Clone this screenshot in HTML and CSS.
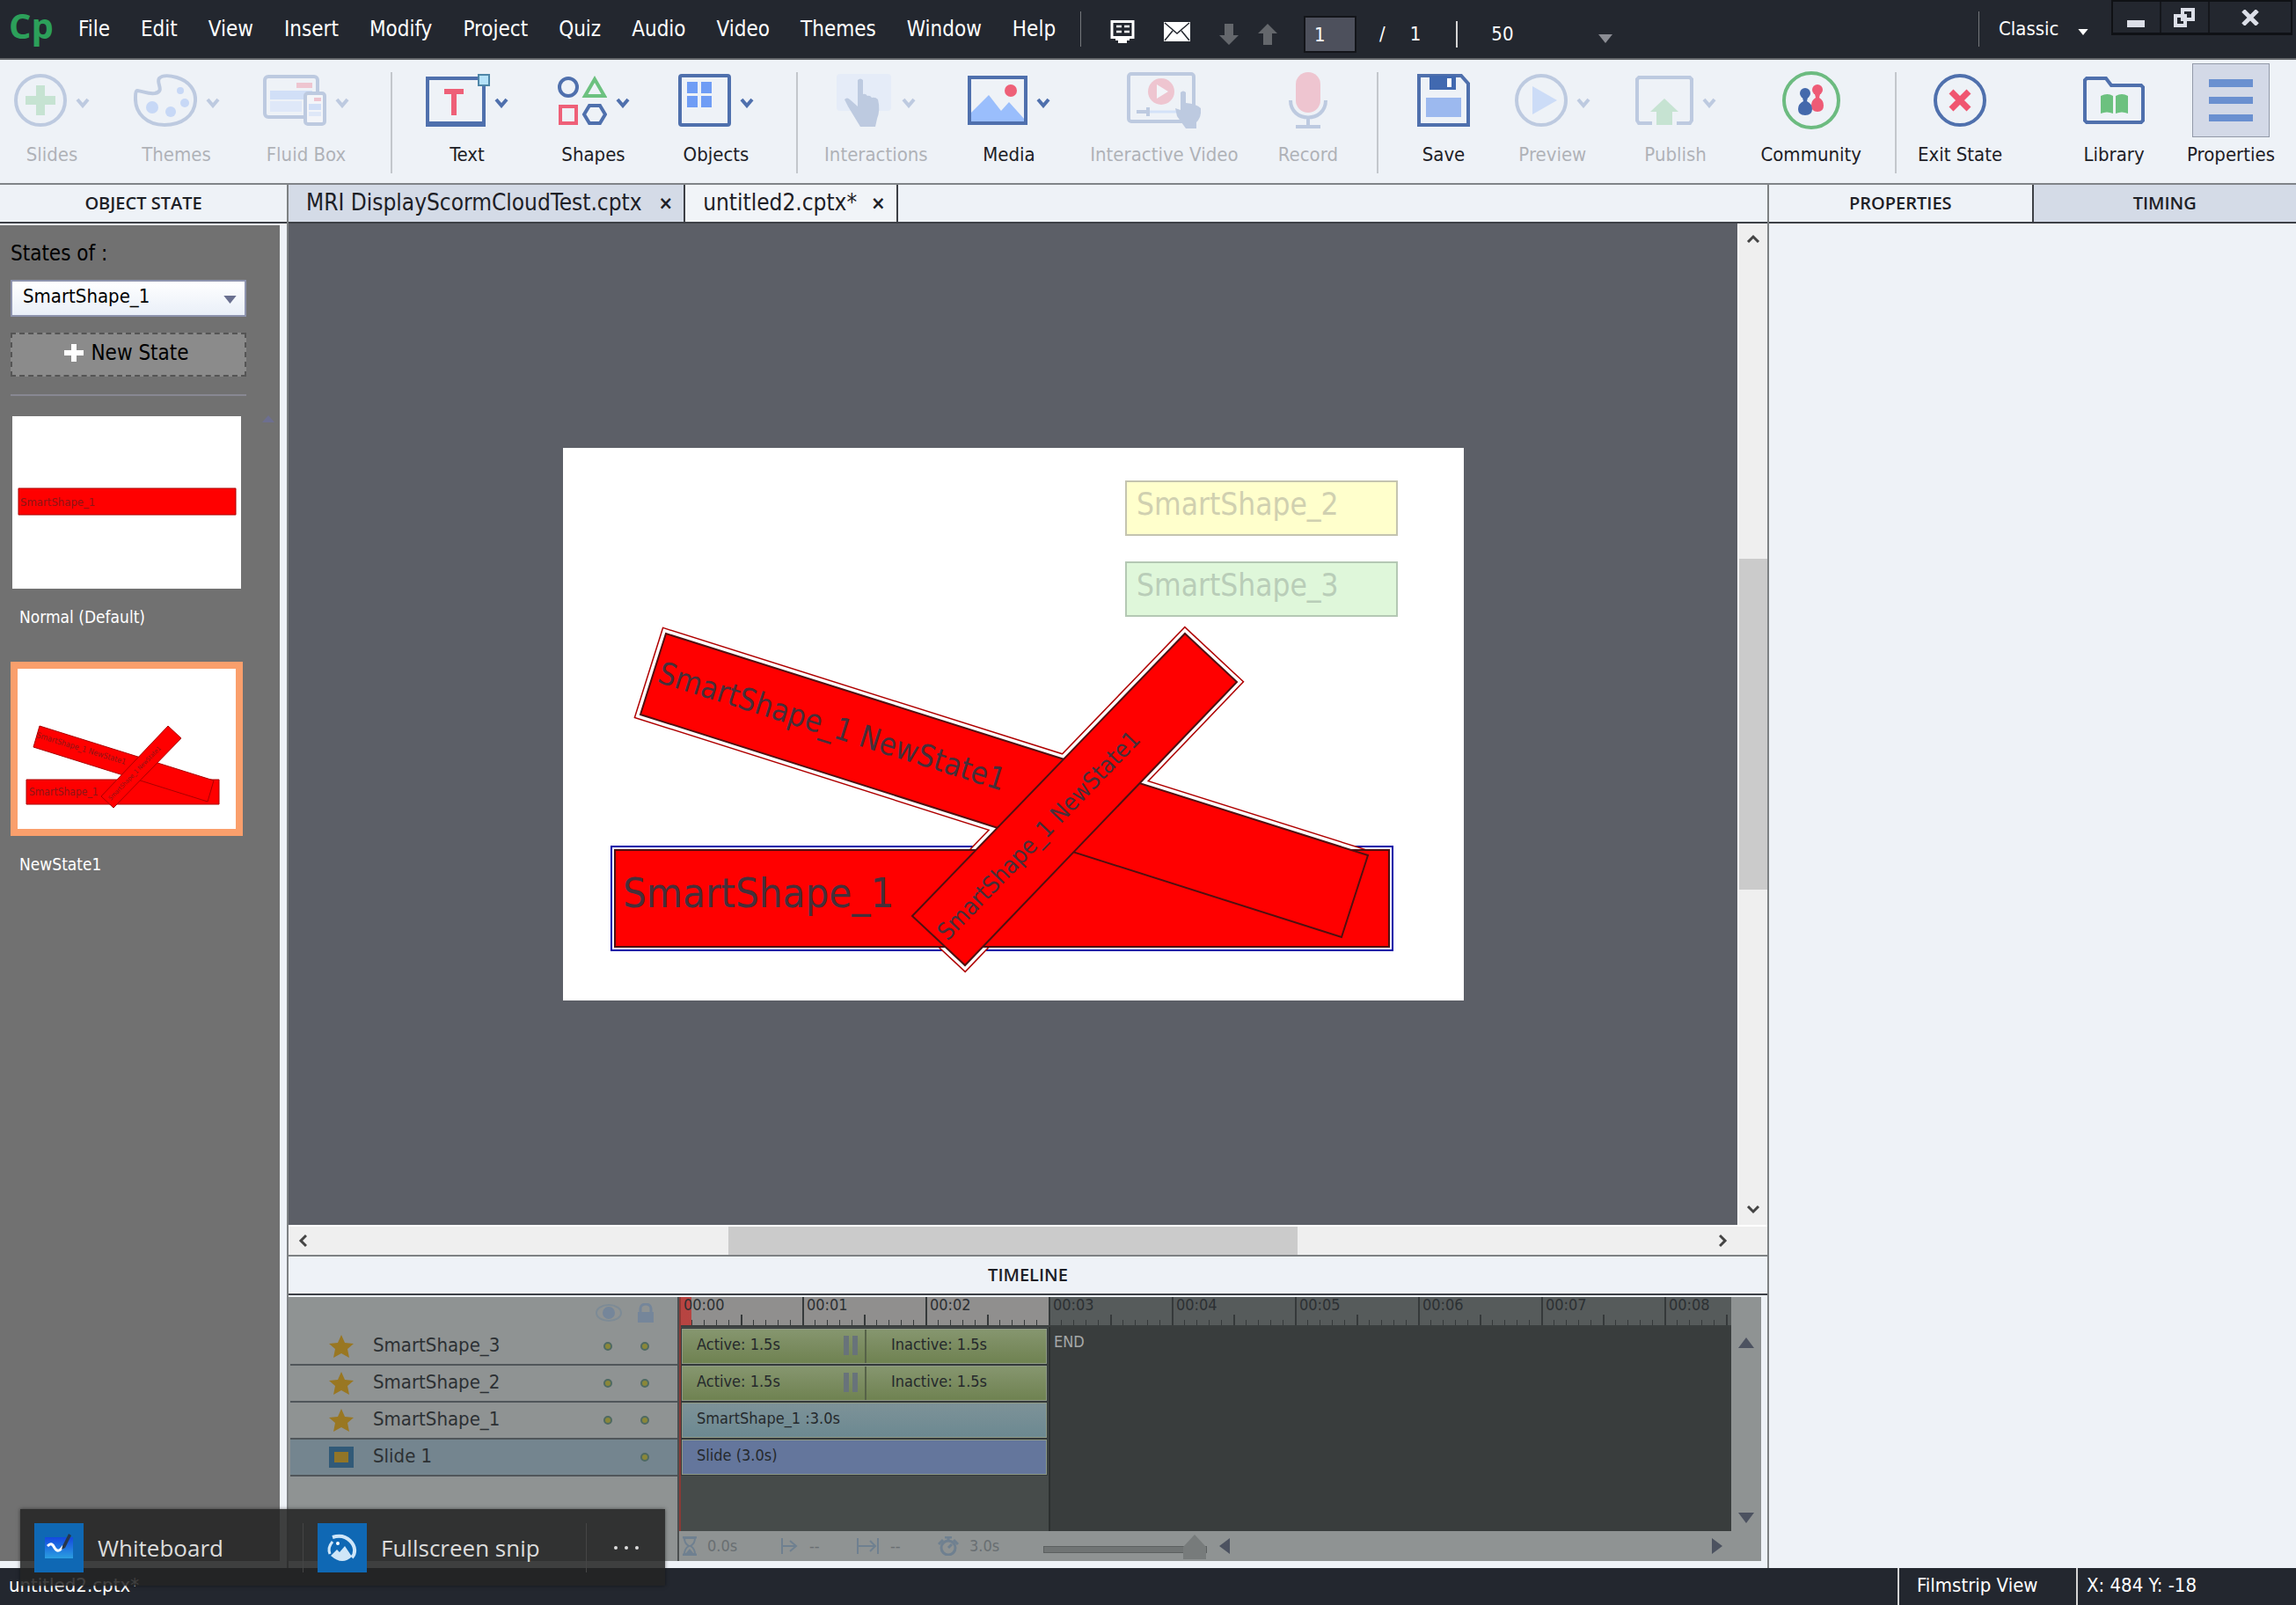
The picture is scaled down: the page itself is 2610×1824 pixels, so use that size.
FILE: index.html
```html
<!DOCTYPE html>
<html lang="en">
<head>
    <meta charset="UTF-8">
    <meta name="viewport" content="width=device-width, initial-scale=1.0">
    <title>Captivate - untitled2.cptx</title>
    <link rel="stylesheet" href="styles.css">
</head>
<body>
    <!-- shared icons -->
    <svg class="defs" width="0" height="0">
        <symbol id="chevron" viewBox="0 0 16 12"><path d="M2 2l6 7 6-7" fill="none" stroke="currentColor" stroke-width="4"/></symbol>
        <symbol id="caret" viewBox="0 0 16 10"><path d="M0 0h16l-8 10z" fill="currentColor"/></symbol>
        <symbol id="arrow" viewBox="0 0 16 10"><path d="M2 9l6-6 6 6" fill="none" stroke="#444" stroke-width="3"/></symbol>
        <symbol id="star" viewBox="0 0 28 26"><path d="M14 0l4 9 10 1-7 6 2 10-9-5-9 5 2-10-7-6 10-1z" fill="#997722"/></symbol>
    </svg>

    <header class="menubar">
        <div class="logo">Cp</div>
        <nav class="menu">
            <button>File</button>
            <button>Edit</button>
            <button>View</button>
            <button>Insert</button>
            <button>Modify</button>
            <button>Project</button>
            <button>Quiz</button>
            <button>Audio</button>
            <button>Video</button>
            <button>Themes</button>
            <button>Window</button>
            <button>Help</button>
        </nav>
        <div class="pager">
            <button aria-label="Live chat"><svg width="28" height="26" viewBox="0 0 28 26"><path d="M2 1.500h24v18H2z" fill="none" stroke="#fff" stroke-width="3"/><path d="M7 7h6M16 7h6M7 13h6M16 13h6" stroke="#fff" stroke-width="2.500"/><path d="M6 20h16v3h-3v3H9v-3H6z" fill="#fff"/></svg></button>
            <button aria-label="Mail"><svg width="30" height="22" viewBox="0 0 30 22"><path d="M0 0h30v22H0z" fill="#fff"/><path d="M1 1l14 12L29 1M1 21l9-11M29 21l-9-11" fill="none" stroke="#23272f" stroke-width="1.500"/></svg></button>
            <button class="step" aria-label="Next slide"><svg width="22" height="24" viewBox="0 0 22 24"><path d="M6 0h10v13h6L11 24 0 13h6z" fill="#64676c"/></svg></button>
            <button class="step" aria-label="Previous slide"><svg width="22" height="24" viewBox="0 0 22 24"><path d="M6 24h10V11h6L11 0 0 11h6z" fill="#64676c"/></svg></button>
            <input type="text" value="1" aria-label="Slide number">
            <span class="total">/</span>
            <span class="count">1</span>
            <div class="dropdown zoom">
                <select aria-label="Zoom"><option>50</option></select>
                <svg width="16" height="10"><use href="#caret"/></svg>
            </div>
        </div>
        <div class="dropdown workspace">
            <select aria-label="Workspace"><option>Classic</option></select>
            <svg width="12" height="7"><use href="#caret"/></svg>
        </div>
        <div class="window-buttons">
            <button aria-label="Minimize"><svg width="22" height="22"><path d="M1 14h20v8H1z" fill="#dcdfe8"/></svg></button>
            <button aria-label="Restore"><svg width="24" height="22" viewBox="0 0 24 22"><path d="M10 2h12v11H10zM2 9h11v11H2z" fill="#23272f" stroke="#dcdfe8" stroke-width="4"/></svg></button>
            <button class="close" aria-label="Close"><svg width="20" height="18"><path d="M2 1l16 16M18 1L2 17" stroke="#dcdfe8" stroke-width="5"/></svg></button>
        </div>
    </header>

    <div class="toolbar">
        <div class="tools insert">
            <button class="tool" disabled>
                <span class="icon">
                    <svg width="60" height="60" viewBox="0 0 60 60"><circle cx="30" cy="30" r="28" fill="none" stroke="#4f70ad" stroke-width="4"/><path d="M25 13h10v12h12v10H35v12H25V35H13V25h12z" fill="#6cc17f"/></svg>
                    <svg class="chevron"><use href="#chevron"/></svg>
                </span>
                <span>Slides</span>
            </button>
            <button class="tool" disabled>
                <span class="icon">
                    <svg width="72" height="60" viewBox="0 0 72 60"><path d="M4 19c8 1 12 4 20 3 12-2 1-12 5-17 4-4 13-3 20-1 14 4 22 15 21 27-1 17-16 27-35 27C15 58 1 45 2 26c0-3 0-7 2-7z" fill="none" stroke="#4f70ad" stroke-width="4"/><g fill="#6f9df5"><circle cx="21" cy="38" r="7"/><circle cx="42" cy="43" r="6"/><circle cx="58" cy="33" r="5"/><circle cx="53" cy="19" r="4"/></g></svg>
                    <svg class="chevron"><use href="#chevron"/></svg>
                </span>
                <span>Themes</span>
            </button>
            <button class="tool" disabled>
                <span class="icon">
                    <svg width="72" height="58" viewBox="0 0 72 58"><rect x="2" y="2" width="60" height="46" rx="4" fill="none" stroke="#4f70ad" stroke-width="4"/><path d="M38 9h18v6H38z" fill="#ee6078"/><path d="M8 18h48v10H8z" fill="#8fb4fa"/><path d="M8 30h36v12H8z" fill="#c0d4fc"/><rect x="48" y="21" width="22" height="35" rx="3" fill="#fff" stroke="#4f70ad" stroke-width="4"/><path d="M58 26h8v4h-8z" fill="#ee6078"/><path d="M52 33h14v7H52z" fill="#8fb4fa"/><path d="M52 42h14v5H52z" fill="#c0d4fc"/></svg>
                    <svg class="chevron"><use href="#chevron"/></svg>
                </span>
                <span>Fluid Box</span>
            </button>
        </div>
        <div class="tools objects">
            <button class="tool">
                <span class="icon">
                    <svg class="text-icon" width="68" height="60" viewBox="0 0 68 60"><path d="M2 5h64v51H2z" fill="none" stroke="#4f70ad" stroke-width="4"/><path d="M0 56h68v4H0z" fill="#4f70ad"/><path d="M60 1h12v12H60z" fill="#b5e2fa" stroke="#4f86a8" stroke-width="2"/><path d="M21 17h22v6h-8v24h-6V23h-8z" fill="#ee6078"/></svg>
                    <svg class="chevron"><use href="#chevron"/></svg>
                </span>
                <span>Text</span>
            </button>
            <button class="tool">
                <span class="icon">
                    <svg width="56" height="56" viewBox="0 0 56 56" fill="none" stroke-width="4"><circle cx="12" cy="13" r="10" stroke="#4f70ad"/><path d="M42 4l11 19H31z" stroke="#6cc17f"/><path d="M3 35h18v19H3z" stroke="#ee6078"/><path d="M36 34h12l6 10-6 10H36l-6-10z" stroke="#4f70ad"/></svg>
                    <svg class="chevron"><use href="#chevron"/></svg>
                </span>
                <span>Shapes</span>
            </button>
            <button class="tool">
                <span class="icon">
                    <svg width="60" height="60" viewBox="0 0 60 60"><rect x="2" y="2" width="56" height="56" rx="2" fill="none" stroke="#4f70ad" stroke-width="4"/><path d="M10 9h12v13H10zM26 9h12v13H26zM10 25h12v13H10zM26 25h12v13H26z" fill="#6f9df5"/></svg>
                    <svg class="chevron"><use href="#chevron"/></svg>
                </span>
                <span>Objects</span>
            </button>
        </div>
        <div class="tools media">
            <button class="tool" disabled>
                <span class="icon">
                    <svg width="64" height="60" viewBox="0 0 64 60"><rect width="62" height="42" rx="4" fill="#d3e0fc"/><path d="M24 7q3-3 6 0v16q3-1 5 2 3-1 5 2 4-1 7 2 3 12-1 22l-2 9H27L13 37l-4-8q3-3 6 0l9 8z" fill="#4f70ad"/></svg>
                    <svg class="chevron"><use href="#chevron"/></svg>
                </span>
                <span>Interactions</span>
            </button>
            <button class="tool">
                <span class="icon">
                    <svg width="68" height="56" viewBox="0 0 68 56"><path d="M3 53V43l21-21 14 18 9-10 18 20v4z" fill="#9abefc"/><circle cx="49" cy="17" r="7" fill="#ee6078"/><path d="M2 2h64v52H2z" fill="none" stroke="#4f70ad" stroke-width="4"/></svg>
                    <svg class="chevron"><use href="#chevron"/></svg>
                </span>
                <span>Media</span>
            </button>
            <button class="tool" disabled>
                <span class="icon">
                    <svg width="84" height="64" viewBox="0 0 84 64"><rect x="2" y="2" width="74" height="54" rx="3" fill="none" stroke="#4f70ad" stroke-width="4"/><circle cx="39" cy="22" r="15" fill="#ee6078"/><path d="M34 14v16l13-8z" fill="#fff"/><path d="M12 45h50" stroke="#9abefc" stroke-width="3"/><path d="M11 45h14M24 40v10" stroke="#4f70ad" stroke-width="4"/><path d="M61 23q3-3 6 0v12q12 1 17 6 1 10-5 16v7H67L57 50l-2-9 6 2z" fill="#4f70ad"/></svg>
                </span>
                <span>Interactive Video</span>
            </button>
            <button class="tool" disabled>
                <span class="icon">
                    <svg width="44" height="66" viewBox="0 0 44 66"><rect x="8" y="1" width="28" height="46" rx="14" fill="#ee6078"/><path d="M2 33c0 26 40 26 40 0M22 53v10M8 63h28" fill="none" stroke="#4f70ad" stroke-width="4"/></svg>
                </span>
                <span>Record</span>
            </button>
        </div>
        <div class="tools output">
            <button class="tool">
                <span class="icon">
                    <svg width="60" height="60" viewBox="0 0 60 60"><path d="M2 2h48l8 9v47H2z" fill="none" stroke="#4f70ad" stroke-width="4"/><path d="M14 2h30v16H14z" fill="#4169b0"/><path d="M34 5h5v10h-5z" fill="#fff"/><path d="M10 27h40v22H10z" fill="#9cb9ef"/></svg>
                </span>
                <span>Save</span>
            </button>
            <button class="tool" disabled>
                <span class="icon">
                    <svg width="60" height="60" viewBox="0 0 60 60"><circle cx="30" cy="30" r="28" fill="none" stroke="#4f70ad" stroke-width="4"/><path d="M20 14v32l28-16z" fill="#7fabfa"/></svg>
                    <svg class="chevron"><use href="#chevron"/></svg>
                </span>
                <span>Preview</span>
            </button>
            <button class="tool" disabled>
                <span class="icon">
                    <svg width="66" height="56" viewBox="0 0 66 56"><path d="M19 54H4l-2-3V4l2-2h58l2 2v47l-2 3H47" fill="none" stroke="#4f70ad" stroke-width="4"/><path d="M24 56V41h-7l16-15 16 15h-7v15z" fill="#6cc17f"/></svg>
                    <svg class="chevron"><use href="#chevron"/></svg>
                </span>
                <span>Publish</span>
            </button>
            <button class="tool">
                <span class="icon">
                    <svg width="66" height="66" viewBox="0 0 66 66"><circle cx="33" cy="33" r="31" fill="none" stroke="#6cbb80" stroke-width="4"/><g fill="#ee5b76"><circle cx="40" cy="21" r="6"/><path d="M37 26h6l-1 4q5 3 5 9 0 7-7 7t-7-7q0-6 5-9z"/></g><g fill="#4469ac"><circle cx="26" cy="25" r="6"/><path d="M23 30h6l-1 4q6 3 6 9 0 7-8 7t-8-7q0-6 6-9z"/></g></svg>
                </span>
                <span>Community</span>
            </button>
        </div>
        <div class="tools panels">
            <button class="tool exit">
                <span class="icon">
                    <svg width="60" height="60" viewBox="0 0 60 60"><circle cx="30" cy="30" r="28" fill="none" stroke="#4f70ad" stroke-width="4"/><path d="M20 20l20 20M40 20L20 40" stroke="#f05570" stroke-width="7"/></svg>
                </span>
                <span>Exit State</span>
            </button>
            <button class="tool">
                <span class="icon">
                    <svg width="70" height="54" viewBox="0 0 70 54"><path d="M2 50V4l2-2h22l6 8h34l2 2v38l-2 2H4z" fill="none" stroke="#4f70ad" stroke-width="4"/><path d="M20 22q8-4 14 0v20q-7-3-14 0zM37 22q7-4 14 0v20q-7-3-14 0z" fill="#6cc17f"/></svg>
                </span>
                <span>Library</span>
            </button>
            <button class="tool active">
                <span class="icon">
                    <svg width="50" height="50" viewBox="0 0 50 50"><path d="M0 1h50v9H0zM0 21h50v8H0zM0 41h50v8H0z" fill="#6a90d0"/></svg>
                </span>
                <span>Properties</span>
            </button>
        </div>
    </div>

    <main class="workspace-area">
        <aside class="states">
            <h2 class="panel-title">OBJECT STATE</h2>
            <div class="states-body">
                <label for="states-of">States of :</label>
                <div class="dropdown state-select">
                    <select id="states-of"><option>SmartShape_1</option></select>
                    <svg width="15" height="9"><use href="#caret"/></svg>
                </div>
                <button class="new-state"><svg width="22" height="20"><path d="M8 0h6v7h8v6h-8v7H8v-7H0V7h8z" fill="#fff"/></svg>New State</button>
                <hr>
                <figure class="state">
                    <svg width="260" height="196" viewBox="0 0 260 196">
                        <path d="M0 0h260v196H0z" fill="#fff"/>
                        <path d="M7 82h247v30H7z" fill="#f00" stroke="#a00"/>
                        <text x="9" y="102" font-size="13" fill="#8c1616">SmartShape_1</text>
                    </svg>
                    <figcaption>Normal (Default)</figcaption>
                </figure>
                <figure class="state selected">
                    <svg width="248" height="182" viewBox="0 0 248 182">
                        <path d="M0 0h248v182H0z" fill="#fff"/>
                        <g fill="#f00" stroke="#a00">
                            <path d="M10 126h219v28H10z"/>
                            <path d="M25 65l-7 24 198 62 7-24z"/>
                            <path d="M171 65l15 14-77 79-14-13z"/>
                        </g>
                        <g fill="#8c1616">
                            <text x="13" y="144" font-size="12">SmartShape_1</text>
                            <text transform="translate(21 78) rotate(17)" font-size="9">SmartShape_1 NewState1</text>
                            <text transform="translate(106 150) rotate(-46)" font-size="7">SmartShape_1 NewState1</text>
                        </g>
                    </svg>
                    <figcaption>NewState1</figcaption>
                </figure>
                <svg class="scroll-up" width="14" height="8"><path d="M0 8h14L7 0z" fill="#6d6f90"/></svg>
            </div>
        </aside>

        <section class="editor">
            <div class="tabs">
                <div class="tab">MRI DisplayScormCloudTest.cptx<button aria-label="Close tab">×</button></div>
                <div class="tab current">untitled2.cptx*<button aria-label="Close tab">×</button></div>
            </div>
            <div class="stage-row">
                <div class="stage">
                    <svg class="slide" width="1024" height="628" viewBox="0 0 1024 628">
                        <path d="M640 38h308v61H640z" fill="#ffffcc" stroke="#c4c4b0" stroke-width="2"/>
                        <text x="652" y="76" font-size="35" fill="#d0d0b0">SmartShape_2</text>
                        <path d="M640 130h308v61H640z" fill="#dff7da" stroke="#b4c8b4" stroke-width="2"/>
                        <text x="652" y="168" font-size="35" fill="#b9cdb8">SmartShape_3</text>
                        <!-- selection outlines -->
                        <path d="M55 453h888v118H55z" fill="#fff" stroke="#0000a8" stroke-width="2"/>
                        <g fill="#f00" stroke="#b00000" stroke-width="12">
                            <path d="M117 211l-29 92 797 253 30-93z"/>
                            <path d="M707 211l59 55-309 322-60-56z"/>
                        </g>
                        <g fill="#f00" stroke="#fff" stroke-width="9">
                            <path d="M117 211l-29 92 797 253 30-93z"/>
                            <path d="M707 211l59 55-309 322-60-56z"/>
                        </g>
                        <g fill="#f00" stroke="#501010" stroke-width="2">
                            <path d="M59 457h880v110H59z"/>
                            <path d="M117 211l-29 92 797 253 30-93z"/>
                            <path d="M707 211l59 55-309 322-60-56z"/>
                        </g>
                        <g fill="#45303a">
                            <text x="68" y="522" font-size="47">SmartShape_1</text>
                            <text transform="translate(106 266) rotate(17.500)" font-size="35">SmartShape_1 NewState1</text>
                            <text transform="translate(437 561) rotate(-46)" font-size="27">SmartShape_1 NewState1</text>
                        </g>
                    </svg>
                </div>
                <div class="scrollbar vertical">
                    <svg width="16" height="10"><use href="#arrow"/></svg>
                    <div class="track"><div class="thumb"></div></div>
                    <svg class="down" width="16" height="10"><use href="#arrow"/></svg>
                </div>
            </div>
            <div class="scrollbar horizontal">
                <svg class="left" width="16" height="10"><use href="#arrow"/></svg>
                <div class="track"><div class="thumb"></div></div>
                <svg class="right" width="16" height="10"><use href="#arrow"/></svg>
            </div>

            <h2 class="panel-title timeline-title">TIMELINE</h2>
            <div class="timeline">
                <div class="layers">
                    <div class="layer layer-head">
                        <svg width="30" height="22" viewBox="0 0 30 22"><ellipse cx="15" cy="11" rx="14" ry="9" fill="none" stroke="#7d8b96" stroke-width="2"/><circle cx="15" cy="11" r="7" fill="#75869a"/></svg>
                        <svg width="20" height="22" viewBox="0 0 20 22"><path d="M4 11V6a6 5 0 0 1 12 0v5" fill="none" stroke="#75869a" stroke-width="3"/><path d="M1 10h18v12H1z" fill="#75869a"/></svg>
                    </div>
                    <div class="layer"><svg width="28" height="26"><use href="#star"/></svg><span>SmartShape_3</span><i class="dot"></i><i class="dot"></i></div>
                    <div class="layer"><svg width="28" height="26"><use href="#star"/></svg><span>SmartShape_2</span><i class="dot"></i><i class="dot"></i></div>
                    <div class="layer"><svg width="28" height="26"><use href="#star"/></svg><span>SmartShape_1</span><i class="dot"></i><i class="dot"></i></div>
                    <div class="layer slide-layer"><svg width="28" height="24"><path d="M3 3h22v18H3z" fill="#917527" stroke="#315a78" stroke-width="6"/></svg><span>Slide 1</span><i class="dot"></i></div>
                </div>
                <div class="time-area">
                    <div class="playhead"></div>
                    <div class="ruler">
                        <span>00:00</span><span>00:01</span><span>00:02</span><span>00:03</span><span>00:04</span><span>00:05</span><span>00:06</span><span>00:07</span><span>00:08</span>
                    </div>
                    <div class="clips">
                        <div class="clip-list">
                            <div class="clip green"><span class="active">Active: 1.5s<i class="pause"></i></span><span>Inactive: 1.5s</span></div>
                            <div class="clip green"><span class="active">Active: 1.5s<i class="pause"></i></span><span>Inactive: 1.5s</span></div>
                            <div class="clip teal"><span>SmartShape_1 :3.0s</span></div>
                            <div class="clip blue"><span>Slide (3.0s)</span></div>
                        </div>
                        <div class="end">END</div>
                    </div>
                    <div class="time-bar">
                        <svg width="16" height="22"><path d="M0 1h16M0 21h16" stroke="#6f8090" stroke-width="3"/><path d="M2 2h12q0 6-5 9 5 3 5 9H2q0-6 5-9-5-3-5-9z" fill="none" stroke="#6f8090" stroke-width="2"/><path d="M3 20l5-6 5 6z" fill="#6f8090"/></svg>
                        <span class="value">0.0s</span>
                        <svg width="20" height="18"><path d="M1 0v18M1 9h15M10 3l7 6-7 6" fill="none" stroke="#6f8090" stroke-width="2"/></svg>
                        <span class="value dash">--</span>
                        <svg width="26" height="18"><path d="M1 0v18M1 9h20M15 3l6 6-6 6M24 0v18" fill="none" stroke="#6f8090" stroke-width="2"/></svg>
                        <span class="value dash">--</span>
                        <svg width="24" height="22"><circle cx="12" cy="13" r="8" fill="none" stroke="#6f8090" stroke-width="3"/><path d="M8 1h8M12 1v4M1 9l5-5M23 9l-5-5M12 13l4-4" stroke="#6f8090" stroke-width="3"/></svg>
                        <span class="value">3.0s</span>
                        <input type="range" min="0" max="100" value="100" aria-label="Timeline zoom">
                        <svg width="12" height="18"><path d="M12 0v18L0 9z" fill="#4c5260"/></svg>
                        <svg class="scroll-right" width="12" height="18"><path d="M0 0v18l12-9z" fill="#4c5260"/></svg>
                    </div>
                </div>
                <div class="timeline-scroll">
                    <svg width="18" height="12"><path d="M0 12h18L9 0z" fill="#4c5260"/></svg>
                    <svg width="18" height="12"><path d="M0 0h18L9 12z" fill="#4c5260"/></svg>
                </div>
            </div>
        </section>

        <aside class="properties">
            <div class="property-tabs">
                <button class="panel-title">PROPERTIES</button>
                <button class="panel-title inactive">TIMING</button>
            </div>
        </aside>
    </main>

    <footer class="status">
        <span class="file">untitled2.cptx*</span>
        <span class="view">Filmstrip View</span>
        <span class="coords">X: 484 Y: -18</span>
    </footer>

    <div class="ink-popup">
        <button class="app">
            <svg width="56" height="56" viewBox="0 0 56 56"><defs><linearGradient id="wb" x2="0" y2="1"><stop stop-color="#1448e0"/><stop offset="1" stop-color="#2b9fe0"/></linearGradient></defs><path d="M0 0h56v56H0z" fill="#0f68b4"/><path d="M12 16h32v24H12z" fill="url(#wb)"/><path d="M15 26c4-4 6-2 8 2 3 5 6 4 10-2" fill="none" stroke="#fff" stroke-width="3"/><path d="M32 26l7-14 3 2-7 14-4 2z" fill="#27364a"/></svg>
            Whiteboard
        </button>
        <button class="app">
            <svg width="56" height="56" viewBox="0 0 56 56"><path d="M0 0h56v56H0z" fill="#0f68b4"/><path d="M17 16q12-4 20 4c7 7 6 15 2 19" stroke="#cfe6f8" stroke-width="4" fill="none"/><path d="M17 21q-6 7-3 14" stroke="#cfe6f8" stroke-width="3" fill="none"/><path d="M15 37l7-7 3 3 6-7 8 12q-5 5-11 5t-13-6z" fill="#cfe6f8"/><circle cx="23" cy="23" r="2" fill="#fff"/></svg>
            Fullscreen snip
        </button>
        <button class="more" aria-label="More"><svg width="30" height="6"><g fill="#ddd"><circle cx="3" cy="3" r="2"/><circle cx="15" cy="3" r="2"/><circle cx="27" cy="3" r="2"/></g></svg></button>
    </div>
</body>
</html>
```
FILE: styles.css
```css
* {
    box-sizing: border-box;
}

body {
    margin: 0;
    height: 100vh;
    display: flex;
    flex-direction: column;
    background-color: #eef2f7;
    color: #1d2026;
    font-family: "DejaVu Sans Condensed", "DejaVu Sans", sans-serif;
    font-size: 22px;
    line-height: 28px;
}

button, input, select {
    font: inherit;
    color: inherit;
    background: none;
    border: 0;
    padding: 0;
    margin: 0;
}

svg {
    display: block;
    flex: none;
}

.defs {
    position: absolute;
}

h2, figure {
    margin: 0;
}

/* drop-downs */
.dropdown {
    position: relative;
}

.dropdown select {
    appearance: none;
    width: 100%;
    height: 100%;
}

.dropdown svg {
    position: absolute;
    right: 0;
    top: 50%;
    pointer-events: none;
}

/* menu bar */
.menubar {
    flex: none;
    display: flex;
    align-items: center;
    height: 68px;
    background-color: #23272f;
    border-bottom: 2px solid #65686c;
    color: #fff;
    font-size: 24px;
}

.logo {
    width: 89px;
    padding-left: 10px;
    padding-bottom: 8px;
    color: #2ca05a;
    font-family: "Open Sans", sans-serif;
    font-size: 40px;
    font-weight: 700;
}

.menu {
    display: flex;
    gap: 35px;
    padding-right: 28px;
    border-right: 1px solid #75787c;
    line-height: 40px;
}

.pager {
    display: flex;
    align-items: center;
    padding-left: 33px;
    padding-top: 12px;
    font-size: 22px;
}

.pager button {
    margin-right: 33px;
    padding-bottom: 6px;
}

.pager .step {
    margin-right: 22px;
    padding: 0;
}

.pager input {
    width: 60px;
    height: 42px;
    margin-left: 8px;
    padding-left: 10px;
    background-color: #4d505c;
    border: 2px solid #13151a;
}

.total {
    margin-left: 26px;
}

.count {
    margin-left: 28px;
}

.zoom {
    width: 178px;
    height: 30px;
    margin-left: 40px;
    border-left: 2px solid #d5d5d5;
}

.zoom select {
    padding-left: 38px;
}

.zoom svg {
    color: #8b8d94;
}

.workspace {
    width: 125px;
    height: 40px;
    margin-left: auto;
    margin-right: 26px;
    border-left: 1px solid #75787c;
}

.workspace select {
    padding-left: 22px;
    font-size: 22px;
}

.window-buttons {
    align-self: flex-start;
    display: flex;
    width: 206px;
    height: 40px;
    margin-right: 4px;
    border: 2px solid #0f1115;
    border-bottom-width: 3px;
}

.window-buttons button {
    flex: 4;
    display: flex;
    align-items: center;
    justify-content: center;
    border-right: 2px solid #14161b;
}

.window-buttons .close {
    flex: 7;
    border: 0;
}

/* toolbar */
.toolbar {
    flex: none;
    display: grid;
    grid-template-columns: 444fr 461fr 660fr 589fr 456fr;
    height: 142px;
    border-bottom: 2px solid #808488;
}

.tools {
    position: relative;
    display: flex;
    justify-content: space-between;
    padding-top: 4px;
}

.tools + .tools::before {
    content: "";
    position: absolute;
    left: 0;
    top: 14px;
    width: 2px;
    height: 115px;
    background-color: #c3c7cc;
}

.insert {
    padding-left: 16px;
    padding-right: 47px;
}

.objects {
    padding-left: 40px;
    padding-right: 48px;
}

.media {
    padding-left: 32px;
    padding-right: 44px;
}

.output {
    padding-left: 46px;
    padding-right: 38px;
    gap: 8px;
}

.panels {
    padding-left: 26px;
    padding-right: 24px;
    gap: 48px;
}

.tool {
    display: flex;
    flex-direction: column;
    align-items: center;
    gap: 6px;
    white-space: nowrap;
}

.tool:disabled {
    color: #1d2026;
    opacity: 0.3;
}

.exit {
    margin-right: auto;
}

.icon {
    display: flex;
    align-items: center;
    justify-content: center;
    gap: 10px;
    height: 84px;
    color: #4f70ad;
}

.icon .chevron {
    width: 16px;
    height: 12px;
    margin-top: 6px;
}

/* the corner handle sticks out of the frame */
.text-icon {
    overflow: visible;
}

.active .icon {
    width: 88px;
    background-color: #d3d9e7;
    border: 1px solid #9299a8;
}

/* three columns below the toolbar */
.workspace-area {
    flex: 1;
    min-height: 0;
    display: grid;
    grid-template-columns: 328px 1fr 599px;
}

.panel-title {
    height: 44px;
    font-family: "Open Sans", sans-serif;
    font-size: 20px;
    font-weight: 600;
    line-height: 42px;
    text-align: center;
    border-bottom: 2px solid #3d4046;
}

/* object state panel */
.states {
    display: flex;
    flex-direction: column;
    border-right: 2px solid #7d8183;
}

.states-body {
    position: relative;
    flex: 1;
    margin: 2px 8px 8px 0;
    padding: 18px 38px 0 12px;
    background-color: #717171;
    color: #000;
    font-size: 24px;
}

.states-body label {
    display: block;
    height: 44px;
}

.state-select {
    height: 42px;
    background: linear-gradient(#fff, #e9eff8);
    border: 2px solid #8d93ad;
}

.state-select select {
    padding-left: 12px;
    padding-bottom: 4px;
    font-size: 22px;
}

.state-select svg {
    right: 9px;
    top: 16px;
    color: #6a7090;
}

.new-state {
    display: flex;
    align-items: center;
    justify-content: center;
    gap: 8px;
    width: 100%;
    height: 50px;
    margin-top: 18px;
    padding-right: 4px;
    padding-bottom: 4px;
    background-color: #8b8b8b;
    border: 2px dashed #555;
}

.states-body hr {
    height: 2px;
    margin: 20px 0 23px;
    background-color: #888892;
    border: 0;
}

.state {
    font-size: 19px;
    color: #fff;
}

.state svg {
    margin-left: 2px;
}

.state figcaption {
    padding: 18px 10px 37px;
}

.selected svg {
    margin: 0;
    width: 264px;
    height: 198px;
    padding: 8px;
    background-color: #fa9f6c;
}

.scroll-up {
    position: absolute;
    right: 6px;
    top: 216px;
}

/* document tabs and stage */
.editor {
    display: flex;
    flex-direction: column;
    min-width: 0;
    border-right: 2px solid #7d8183;
}

.tabs {
    display: flex;
    height: 44px;
    border-bottom: 2px solid #3d4046;
}

.tab {
    display: flex;
    gap: 19px;
    padding: 0 12px 0 20px;
    background-color: #d4dbe7;
    border-right: 2px solid #3d4046;
    font-size: 26px;
    line-height: 40px;
}

.tab button {
    font-size: 22px;
    font-weight: bold;
}

.current {
    gap: 16px;
    background-color: #f1f4f8;
}

.stage-row {
    flex: 1;
    min-height: 0;
    display: flex;
}

.stage {
    flex: 1;
    display: flex;
    align-items: center;
    justify-content: center;
    background-color: #5c5f67;
}

.slide {
    background-color: #fff;
}

.scrollbar {
    flex: none;
    display: flex;
    align-items: center;
    background-color: #efefef;
}

.vertical {
    flex-direction: column;
    width: 34px;
    padding: 12px 0;
    border-left: 2px solid #fff;
}

.horizontal {
    height: 36px;
    padding: 0 42px 0 8px;
    border-top: 2px solid #fff;
    border-bottom: 2px solid #7d8183;
}

.track {
    flex: 1;
    display: flex;
}

.track::before, .track::after {
    content: "";
    flex: 1;
}

.vertical .track {
    flex-direction: column;
    width: 100%;
    margin: 10px 0;
}

.horizontal .track {
    height: 100%;
    margin: 0 10px;
}

.thumb {
    background-color: #cbcbcb;
}

.vertical .thumb {
    height: 35%;
}

.horizontal .thumb {
    width: 41%;
}

.down {
    transform: rotate(180deg);
}

.left {
    transform: rotate(-90deg);
}

.right {
    transform: rotate(90deg);
}

/* timeline */
.timeline-title {
    flex: none;
}

.timeline {
    flex: none;
    display: flex;
    height: 300px;
    margin: 2px 7px 8px 0;
    background-color: #8f9393;
}

.layers {
    width: 444px;
    border-right: 2px solid #4a4f50;
}

.layer {
    display: flex;
    align-items: center;
    height: 42px;
    margin-left: 2px;
    padding: 0 32px 0 44px;
    border-bottom: 2px solid #50565a;
    color: #2c3033;
}

.layer span {
    margin-left: 22px;
    margin-right: auto;
    padding-bottom: 2px;
}

.layer-head {
    justify-content: flex-end;
    gap: 17px;
    height: 36px;
    padding-right: 26px;
    border: 0;
}

.slide-layer {
    background-color: #74858f;
}

.dot {
    width: 10px;
    height: 10px;
    background-color: #8a8739;
    border: 2px solid #4f6a62;
    border-radius: 50%;
}

.dot + .dot {
    margin-left: 32px;
}

.time-area {
    position: relative;
    flex: 1;
    display: flex;
    flex-direction: column;
    min-width: 0;
}

.ruler {
    display: flex;
    height: 34px;
    border-bottom: 2px solid #3a3e3e;
    background:
        repeating-linear-gradient(90deg, #35393a 0 2px, transparent 2px 140px),
        repeating-linear-gradient(90deg, transparent 0 70px, #35393a 70px 72px, transparent 72px 140px) 0 20px / 100% 12px no-repeat,
        repeating-linear-gradient(90deg, #35393a 0 1px, transparent 1px 14px) 0 26px / 100% 6px no-repeat,
        linear-gradient(90deg, #908f8e 420px, #565b5b 420px);
    font-size: 18px;
    line-height: 18px;
    color: #2c3033;
}

.ruler span {
    position: relative;
    z-index: 1;
    width: 140px;
    flex: none;
    padding-left: 5px;
}

.ruler span:last-child {
    flex: 1;
}

.clips {
    flex: 1;
    display: flex;
    background-color: #464b4a;
    font-size: 18px;
    line-height: 34px;
}

.clip-list {
    width: 420px;
    padding: 2px 2px 0 3px;
}

.clip {
    display: flex;
    height: 40px;
    margin-bottom: 2px;
    border: 1px solid #8f9a86;
    outline: 1px solid #33393a;
    color: #25292c;
}

.clip span {
    padding-left: 16px;
}

.clip .active {
    display: flex;
    justify-content: space-between;
    width: 209px;
    margin-right: 12px;
    border-right: 2px solid #566248;
}

.green {
    background: linear-gradient(#86966f, #6f8251);
}

.teal {
    background: linear-gradient(#7d9298, #6c8991);
}

.blue {
    background: #64769c;
}

.pause {
    width: 16px;
    height: 22px;
    margin: 7px 8px;
    border-left: 6px solid #68737a;
    border-right: 6px solid #68737a;
}

.end {
    flex: 1;
    padding-left: 4px;
    background-color: #393d3d;
    border-left: 2px solid #2c3030;
    color: #a5a8a8;
}

.playhead {
    position: absolute;
    left: 0;
    top: 0;
    width: 14px;
    height: 266px;
    border-left: 2px solid #8a3a36;
    background: linear-gradient(rgba(190, 55, 52, 0.85) 32px, transparent 32px);
}

.time-bar {
    display: flex;
    align-items: center;
    height: 34px;
    padding-left: 4px;
    padding-right: 10px;
    font-size: 18px;
    color: #696f72;
}

.value {
    width: 66px;
    margin-left: 12px;
    margin-right: 18px;
}

.dash {
    width: 36px;
}

.time-bar input {
    appearance: none;
    width: 186px;
    height: 8px;
    margin-right: 14px;
    margin-top: 8px;
    background-color: #707474;
    border: 1px solid #5c6060;
}

.time-bar input::-webkit-slider-thumb {
    appearance: none;
    width: 26px;
    height: 28px;
    margin-top: -6px;
    background-color: #777b7b;
    clip-path: polygon(50% 0, 100% 50%, 100% 100%, 0 100%, 0 50%);
}

.scroll-right {
    margin-left: auto;
}

.timeline-scroll {
    display: flex;
    flex-direction: column;
    justify-content: space-between;
    align-items: center;
    width: 34px;
    padding: 46px 0 43px;
}

/* properties panel */
.property-tabs {
    display: flex;
}

.property-tabs button {
    flex: 1;
}

.inactive {
    background-color: #d4dbe7;
    border-left: 2px solid #3d4046;
}

/* status bar */
.status {
    flex: none;
    display: flex;
    height: 42px;
    padding-left: 10px;
    background-color: #23272f;
    color: #fff;
    line-height: 40px;
}

.file {
    margin-right: auto;
}

.view, .coords {
    padding-left: 20px;
    border-left: 2px solid #d5d5d5;
}

.view {
    width: 203px;
}

.coords {
    width: 250px;
    padding-left: 10px;
}

/* popup over the bottom left corner */
.ink-popup {
    position: absolute;
    left: 23px;
    bottom: 22px;
    z-index: 2;
    display: flex;
    align-items: center;
    height: 87px;
    background-color: rgba(36, 36, 36, 0.87);
    box-shadow: 0 0 4px rgba(0, 0, 0, 0.5);
    color: #dcdcdc;
    font-family: "Open Sans", sans-serif;
    font-size: 26px;
}

.app {
    display: flex;
    align-items: center;
    gap: 16px;
    width: 322px;
    padding-left: 16px;
    border-right: 1px solid #454545;
}

.more {
    width: 89px;
    padding-left: 30px;
}
```
